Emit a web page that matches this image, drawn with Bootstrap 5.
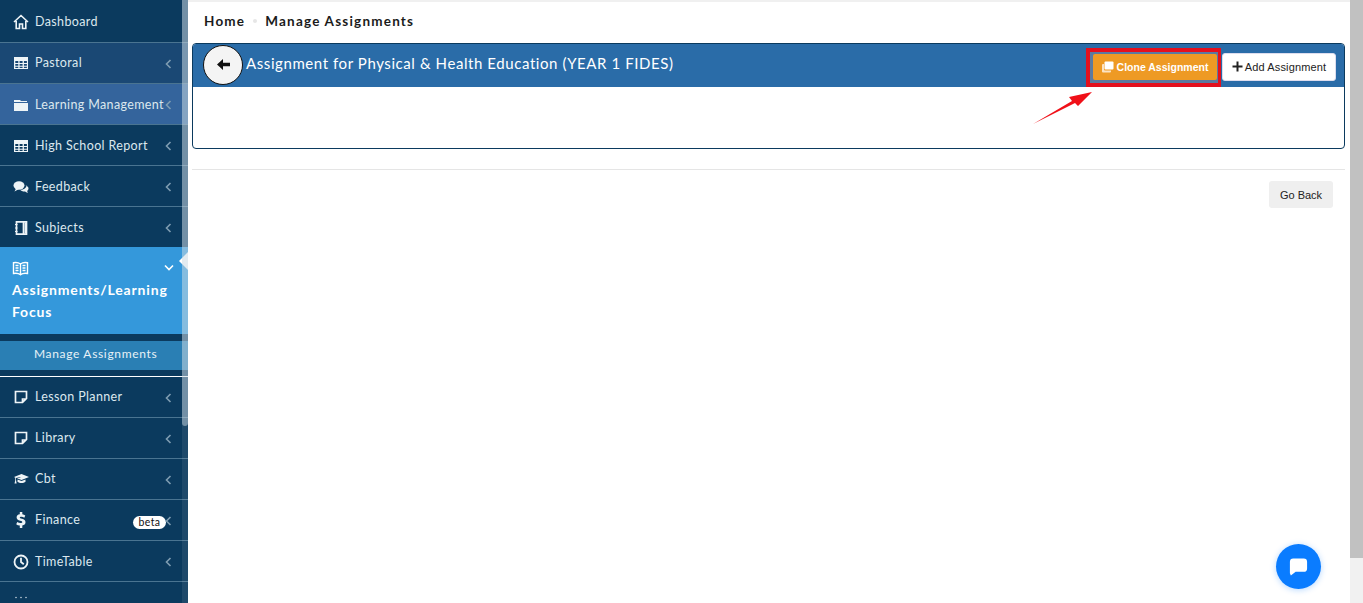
<!DOCTYPE html>
<html lang="en"><head><meta charset="utf-8"><title>Manage Assignments</title>
<link href="https://cdn.jsdelivr.net/npm/bootstrap@5.3.0/dist/css/bootstrap.min.css" rel="stylesheet">
<style>
html,body{height:603px;overflow:hidden;background:#fff}
body{font-family:"Lato","Liberation Sans",sans-serif;display:flex;font-size:13px}
.side{width:188px;height:603px;background:#0b3a5e;position:relative;overflow:hidden;flex:none}
.side-row{height:41px;display:flex;align-items:center;padding:0 18px 0 13px;color:#dce8ee;border-bottom:1px solid #4a7491;font-size:12.5px;letter-spacing:.36px;white-space:nowrap;position:relative}
.side-row svg.ic{width:16px;height:16px;margin-right:6px;flex:none;fill:none;stroke:#eef4f7;stroke-width:1.6}
.side-row svg.ic.solid{fill:#eef4f7;stroke:none}
.side-row .chev{position:absolute;left:165px;top:16px;width:7px;height:10px;fill:none;stroke:#7f9db2;stroke-width:1.6}
.row-first{height:43px;padding-top:2px}
.row-b{background:#1a4874}
.row-c{background:#34649c;padding-top:2px}
.row-last{height:40px;border-bottom:0;padding-top:2px}
.row-nudge{padding-top:2px}
.active-head{background:#3498db;height:87px;padding:14px 12px 0;color:#fff;font-weight:700;font-size:14px;line-height:22px;letter-spacing:.82px;position:relative}
.active-head svg.ic{display:block;width:17px;height:15px;fill:none;stroke:#fff;stroke-width:1.4;margin-bottom:3px}
.active-head .chev{position:absolute;left:164px;top:17px;width:10px;height:7px;fill:none;stroke:#fff;stroke-width:1.6}
.notch{position:absolute;right:0;top:5px;width:0;height:0;border:9px solid transparent;border-right-color:#fff;border-left-width:0}
.sub-wrap{background:#0b3a5e;padding:7px 0 6px;border-bottom:1px solid #fff;height:43px}
.sub-item{background:#2a7fb4;height:29px;line-height:26px;padding-left:34px;color:#e8f2f7;font-size:12px;letter-spacing:.66px}
.beta{position:absolute;left:133px;top:16px;background:#fff;color:#111;border-radius:8px;font-size:10.5px;line-height:13px;padding:0 5.5px;letter-spacing:.4px;font-weight:400}
.side-bar{position:absolute;right:0;top:0;width:6px;height:603px;background:rgba(255,255,255,.08)}
.side-thumb{position:absolute;right:0;top:0;width:6px;height:426px;background:rgba(200,215,225,.5);border-radius:0 0 3px 3px}
.main-col{flex:1;min-width:0;padding:0 5px 0 4px}
.shadow-top{height:2px;background:#f0f0f0;margin:0 -5px 0 -4px}
.crumb{height:41px;display:flex;align-items:center;padding:0 0 3px 12px;font-weight:700;color:#1b1b1b;font-size:13.5px;letter-spacing:1.2px}
.crumb i{display:inline-block;width:4px;height:4px;background:#e6e6e6;border-radius:50%;margin:0 8px}
.panel{height:106px;border:1px solid #0b3a5e;border-radius:4px;overflow:hidden;background:#fff}
.panel-top{height:43px;background:#2a6ca8;display:flex;align-items:center;padding:0 8px 0 10px;color:#fff}
.back{width:40px;height:40px;border-radius:50%;background:#f4f4f4;border:1px solid #111;display:flex;align-items:center;justify-content:center;flex:none;margin:0 3px 2px 0}
.ttl{font-size:15px;letter-spacing:.58px;flex:1;white-space:nowrap;margin-bottom:4px}
.clone-box{border:4px solid #e3101e;border-right-width:3px;padding:2px 1px 3px 3px;background:#5b7aa0;display:flex;margin:4px 1px 0 0}
.btn-clone{background:#ee9a24;color:#fff;font:700 10.5px "Liberation Sans",sans-serif;border:0;border-radius:2px;height:26px;width:124px;padding:0;display:flex;align-items:center;justify-content:center;gap:3px}
.btn-add{background:#fff;color:#222;font:400 11px "Liberation Sans",sans-serif;letter-spacing:.15px;border:1px solid #dde;border-radius:3px;height:28px;width:114px;padding:0;display:flex;align-items:center;justify-content:center;gap:2px;margin-top:2px}
.rule{border-top:1px solid #e5e5e5;margin:20px 0 0}
.btn-back{background:#efefef;color:#222;font:400 11px "Liberation Sans",sans-serif;border:0;border-radius:3px;width:64px;height:27px;padding:0}
.back-row{padding:11px 12px 0 0;display:flex;justify-content:flex-end}
.page-bar{width:13px;height:603px;background:#f1f1f1;flex:none}
.page-thumb{height:558px;background:#c1c1c1}
.arrow{position:absolute;left:1030px;top:88px;width:66px;height:40px}
.chat{position:absolute;left:1276px;top:544px;width:45px;height:45px;border-radius:50%;background:#0a7cff;box-shadow:0 1px 6px rgba(10,124,255,.3);display:flex;align-items:center;justify-content:center}
</style></head><body>
<nav class="side">
<div class="side-row row-first"><svg class="ic" viewBox="0 0 16 16"><path d="M1 8 8 1.5 15 8M3.2 7v7.5h3.3V10h3v4.500h3.300V7"/></svg>Dashboard</div>
<div class="side-row row-b"><svg class="ic solid" viewBox="0 0 16 16"><path fill-rule="evenodd" d="M1 2h14v12H1zM2.300 6v2h3V6zm4.300 0v2h3V6zm4.300 0v2h3V6zM2.300 9v1.700h3V9zm4.300 0v1.700h3V9zm4.300 0v1.700h3V9zm-8.600 2.700v1.200h3v-1.200zm4.300 0v1.200h3v-1.200zm4.300 0v1.200h3v-1.200z"/></svg>Pastoral<svg class="chev" viewBox="0 0 7 10"><path d="M5.500 1 1.500 5l4 4"/></svg></div>
<div class="side-row row-c"><svg class="ic solid" viewBox="0 0 16 16"><path d="M1 4V3h6l1 1h6v1H1zM1 6h14v8H1z"/></svg>Learning Management<svg class="chev" viewBox="0 0 7 10"><path d="M5.500 1 1.500 5l4 4"/></svg></div>
<div class="side-row row-nudge"><svg class="ic solid" viewBox="0 0 16 16"><path fill-rule="evenodd" d="M1 2h14v12H1zM2.300 6v2h3V6zm4.300 0v2h3V6zm4.300 0v2h3V6zM2.300 9v1.700h3V9zm4.300 0v1.700h3V9zm4.300 0v1.700h3V9zm-8.600 2.700v1.200h3v-1.200zm4.300 0v1.200h3v-1.200zm4.300 0v1.200h3v-1.200z"/></svg>High School Report<svg class="chev" viewBox="0 0 7 10"><path d="M5.500 1 1.500 5l4 4"/></svg></div>
<div class="side-row row-nudge"><svg class="ic solid" viewBox="0 0 16 16"><ellipse cx="6" cy="6.500" rx="5.500" ry="4.200"/><path d="M3 9.500 1.500 12.500 6 10zM12.500 6.200c2 .8 3 2 3 3.300 0 1-.6 1.800-1.400 2.400l.9 2-3-1.400c-1.700.2-3.800-.4-4.800-1.700 3.800 0 6.300-2 6.300-4.600z"/></svg>Feedback<svg class="chev" viewBox="0 0 7 10"><path d="M5.500 1 1.500 5l4 4"/></svg></div>
<div class="side-row row-last"><svg class="ic" viewBox="0 0 16 16"><path d="M3.500 1.800h10v12.400h-10zM10.500 1.800v12.400" stroke-width="1.700"/><path d="M11.500 2.500h1.500v11h-1.500z" fill="#eef4f7" stroke="none"/><path d="M2 4.500h2.500M2 8h2.500M2 11.500h2.500" stroke-width="1.200"/></svg>Subjects<svg class="chev" viewBox="0 0 7 10"><path d="M5.500 1 1.500 5l4 4"/></svg></div>
<div class="active-head"><svg class="ic" viewBox="0 0 17 15"><path d="M8.500 3C7 1.800 4 1.300 1.500 1.700V12.500C4 12.100 7 12.600 8.500 13.800 10 12.600 13 12.100 15.500 12.500V1.700C13 1.300 10 1.800 8.500 3zM8.500 3v10.800M3.500 4.500h3M3.500 7h3M3.500 9.500h3M10.500 4.500h3M10.500 7h3M10.500 9.500h3"/></svg>Assignments/Learning Focus<svg class="chev" viewBox="0 0 10 7"><path d="M1 1.500 5 5.500l4-4"/></svg><span class="notch"></span></div>
<div class="sub-wrap"><div class="sub-item">Manage Assignments</div></div>
<div class="side-row"><svg class="ic" viewBox="0 0 16 16"><path d="M2.500 2.500h11v7l-4 4h-7zM13 10H9.500v3.500" stroke-width="1.700"/></svg>Lesson Planner<svg class="chev" viewBox="0 0 7 10"><path d="M5.500 1 1.500 5l4 4"/></svg></div>
<div class="side-row"><svg class="ic" viewBox="0 0 16 16"><path d="M2.500 2.500h11v7l-4 4h-7zM13 10H9.500v3.500" stroke-width="1.700"/></svg>Library<svg class="chev" viewBox="0 0 7 10"><path d="M5.500 1 1.500 5l4 4"/></svg></div>
<div class="side-row"><svg class="ic solid" viewBox="0 0 16 16"><path d="M8.500 3 16 6l-7.500 3L4 7.200 7.500 6.500 7.300 6 3 6.900V9l.6 3.500H1.500L2.300 9V6.700L1 6zM4.500 8.500l4 1.500 4-1.500v2.300c-2 1.700-6 1.700-8 0z"/></svg>Cbt<svg class="chev" viewBox="0 0 7 10"><path d="M5.500 1 1.500 5l4 4"/></svg></div>
<div class="side-row"><svg class="ic solid" viewBox="0 0 16 16"><path d="M6.800 0h2.500v2.300c1.200.2 2.200.6 3 1.100l-1 2.300c-.9-.6-1.900-1-3-1-1 0-1.500.3-1.500.8 0 .6.700.9 2.200 1.300 2.200.6 3.500 1.500 3.500 3.500 0 1.700-1.200 2.900-3.200 3.200V16H6.800v-2.400c-1.400-.2-2.700-.7-3.600-1.400l1.100-2.300c1 .7 2.100 1.200 3.300 1.200 1 0 1.700-.4 1.700-1s-.6-1-2.200-1.400C4.900 8.100 3.600 7.200 3.600 5.300c0-1.600 1.200-2.800 3.200-3z"/></svg>Finance<span class="beta">beta</span><svg class="chev" viewBox="0 0 7 10"><path d="M5.500 1 1.500 5l4 4"/></svg></div>
<div class="side-row row-nudge"><svg class="ic" viewBox="0 0 16 16"><circle cx="8" cy="8" r="6.500" stroke-width="1.800"/><path d="M8 3.800V8l2.800 2.200" stroke-width="1.800"/></svg>TimeTable<svg class="chev" viewBox="0 0 7 10"><path d="M5.500 1 1.500 5l4 4"/></svg></div>
<div class="side-row"><svg class="ic solid" viewBox="0 0 16 16"><circle cx="3" cy="3.500" r=".7"/><circle cx="8" cy="3.500" r=".7"/><circle cx="13" cy="3.500" r=".7"/></svg></div>
<div class="side-bar"><div class="side-thumb"></div></div>
</nav>
<main class="main-col">
<div class="shadow-top"></div>
<div class="crumb">Home<i></i>Manage Assignments</div>
<section class="panel">
<div class="panel-top">
<div class="back"><svg width="13" height="11" viewBox="0 0 13 11"><path d="M0 5.500 6 0v3.800h7v3.400H6V11z" fill="#111"/></svg></div>
<div class="ttl">Assignment for Physical &amp; Health Education (YEAR 1 FIDES)</div>
<div class="clone-box"><button class="btn-clone" type="button"><svg width="12" height="12" viewBox="0 0 12 12"><path d="M3.500 0.500h7a1 1 0 0 1 1 1v6a1 1 0 0 1-1 1H3.500a1 1 0 0 1-1-1v-6a1 1 0 0 1 1-1z" fill="#fff"/><path d="M1 3h1v5.500a1 1 0 0 0 1 1h6v1a1 1 0 0 1-1 1H1a1 1 0 0 1-1-1V4a1 1 0 0 1 1-1z" fill="#fbe3c3"/></svg>Clone Assignment</button></div>
<button class="btn-add" type="button"><svg width="11" height="11" viewBox="0 0 11 11"><path d="M5.500.5v10M.5 5.500h10" stroke="#222" stroke-width="2"/></svg>Add Assignment</button>
</div>
</section>
<div class="rule"></div>
<div class="back-row"><button class="btn-back" type="button">Go Back</button></div>
</main>
<aside class="page-bar"><div class="page-thumb"></div></aside>
<svg class="arrow" viewBox="0 0 66 40"><path d="M3 36 42 13 39 9 62 4 48 18 45 15z" fill="#f01018"/></svg>
<div class="chat"><svg width="21" height="21" viewBox="0 0 22 22"><path d="M5.500 2.500h11a3.500 3.500 0 0 1 3.500 3.500v7a3.500 3.500 0 0 1-3.500 3.500H8L3 20.500 2 18V6a3.500 3.500 0 0 1 3.500-3.500z" fill="#fff"/></svg></div>
<script src="https://cdn.jsdelivr.net/npm/bootstrap@5.3.0/dist/js/bootstrap.bundle.min.js"></script>
</body></html>
